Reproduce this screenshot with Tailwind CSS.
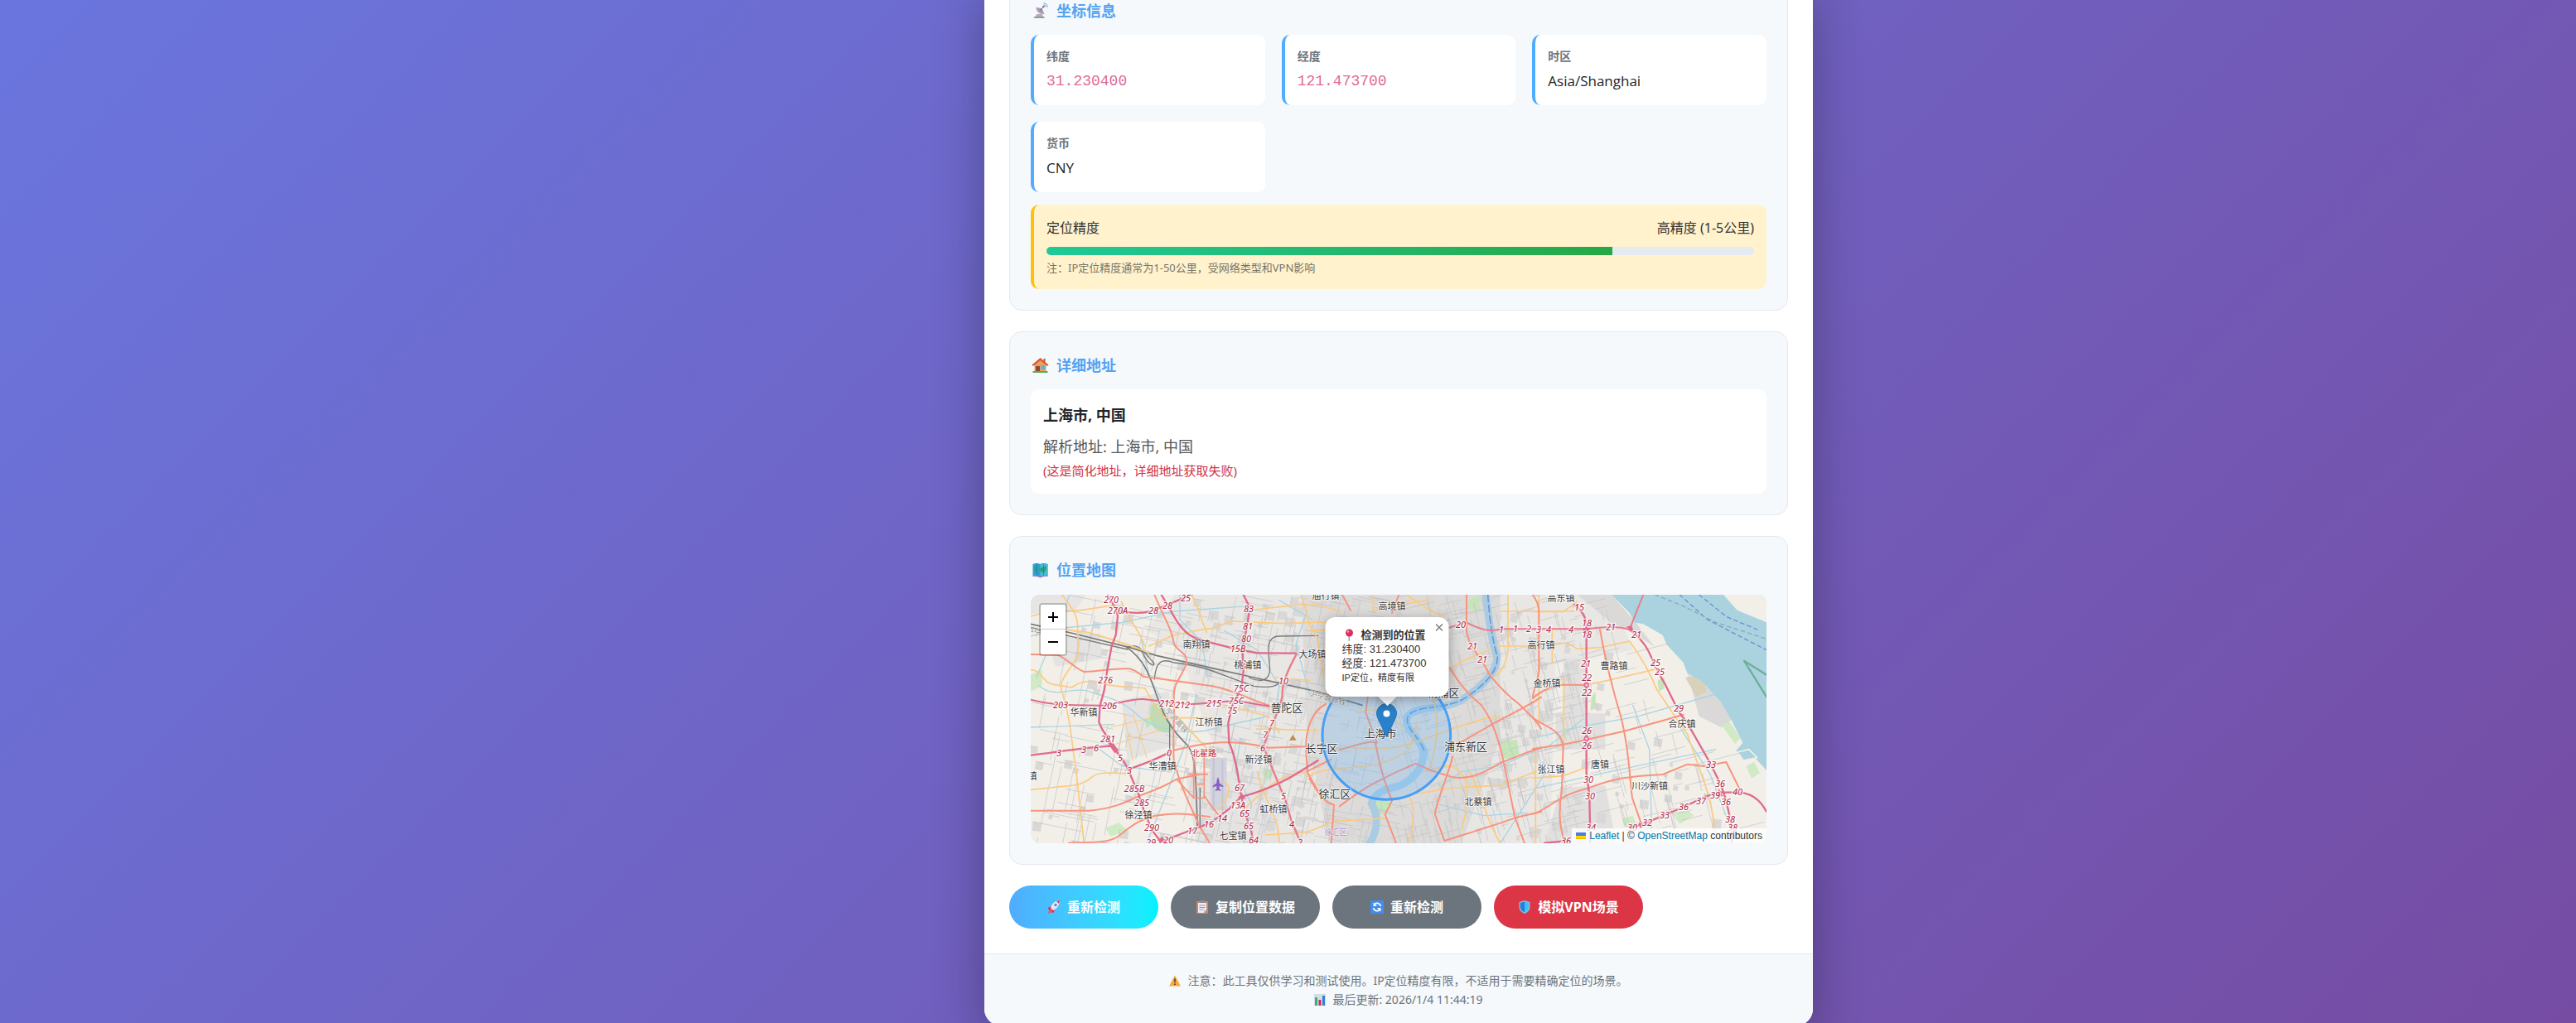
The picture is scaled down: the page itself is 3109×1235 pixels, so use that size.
<!DOCTYPE html>
<html lang="zh-CN">
<head>
    <meta charset="UTF-8">
    <meta name="viewport" content="width=device-width, initial-scale=1.0">
    <title>IP定位检测工具</title>
    <script src="https://cdn.jsdelivr.net/npm/@tailwindcss/browser@4"></script>
</head>
<body class="min-h-screen overflow-hidden bg-[linear-gradient(135deg,#6a76de_0%,#764ca3_100%)] pl-[267px] font-['Noto_Sans','Noto_Sans_CJK_SC',sans-serif] text-[#212529]">
    <div class="mx-auto -mt-7 max-w-[1000px] overflow-hidden rounded-[20px] bg-white shadow-[0_20px_60px_rgba(0,0,0,0.3)]">
        <main class="space-y-[25px] px-[30px] pb-[30px]">
            <!-- Coordinates -->
            <section class="rounded-[15px] border border-[#e2e8f0] bg-[#f6f9fc] p-[25px]">
                <h2 class="mb-[15px] flex h-[29px] items-center gap-2 text-lg font-bold text-[#54a3f2]">
                    <svg class="h-5 w-[23px]" viewBox="0 0 20 20" aria-hidden="true">
                        <path d="M3 18h11l-2-4H6z" fill="#b9aabf"/>
                        <path d="M3 17h12v2H2z" fill="#a293a9"/>
                        <path d="M5 6c0 6 4 9 10 8z" fill="#c9bcd0"/>
                        <path d="M5 6c1 4 5 8 10 8L12 7z" fill="#a99ab3"/>
                        <path d="M10 10l4-5" stroke="#7c6f86" stroke-width="1"/>
                        <circle cx="14" cy="5" r="1.2" fill="#6b5f78"/>
                        <path d="M14 2.5a4 4 0 0 1 3 3M14 .5a6 6 0 0 1 5 5" fill="none" stroke="#5aa7e6" stroke-width="1"/>
                    </svg>
                    坐标信息
                </h2>
                <dl class="grid grid-cols-3 gap-5">
                    <div class="rounded-[10px] border-l-4 border-[#4facfe] bg-white p-[15px]">
                        <dt class="mb-[5px] text-sm leading-[22px] font-semibold text-[#6c757d]">纬度</dt>
                        <dd class="font-['Liberation_Mono',monospace] text-lg leading-7 text-[#d63370]/75">31.230400</dd>
                    </div>
                    <div class="rounded-[10px] border-l-4 border-[#4facfe] bg-white p-[15px]">
                        <dt class="mb-[5px] text-sm leading-[22px] font-semibold text-[#6c757d]">经度</dt>
                        <dd class="font-['Liberation_Mono',monospace] text-lg leading-7 text-[#d63370]/75">121.473700</dd>
                    </div>
                    <div class="rounded-[10px] border-l-4 border-[#4facfe] bg-white p-[15px]">
                        <dt class="mb-[5px] text-sm leading-[22px] font-semibold text-[#6c757d]">时区</dt>
                        <dd class="font-['Open_Sans',sans-serif] text-[17px] leading-7 font-medium">Asia/Shanghai</dd>
                    </div>
                    <div class="rounded-[10px] border-l-4 border-[#4facfe] bg-white p-[15px]">
                        <dt class="mb-[5px] text-sm leading-[22px] font-semibold text-[#6c757d]">货币</dt>
                        <dd class="font-['Open_Sans',sans-serif] text-[17px] leading-7 font-medium">CNY</dd>
                    </div>
                </dl>
                <div class="mt-[15px] rounded-[10px] border-l-4 border-[#ffc107] bg-[#fff2cd] p-[15px]">
                    <div class="flex justify-between leading-[26px] text-[#333]">
                        <span>定位精度</span>
                        <span>高精度 (1-5公里)</span>
                    </div>
                    <div class="mt-[10px] mb-[5px] h-[10px] overflow-hidden rounded-[5px] bg-[#e6eaf3]">
                        <div class="h-full bg-linear-to-r from-[#20c997] to-[#28a745]" style="width: 80%"></div>
                    </div>
                    <p class="text-[13px] leading-[21px] text-[#777568]">注：IP定位精度通常为1-50公里，受网络类型和VPN影响</p>
                </div>
            </section>

            <!-- Address -->
            <section class="rounded-[15px] border border-[#e2e8f0] bg-[#f6f9fc] p-[25px]">
                <h2 class="mb-[15px] flex h-[29px] items-center gap-2 text-lg font-bold text-[#54a3f2]">
                    <svg class="h-5 w-[23px]" viewBox="0 0 20 20" aria-hidden="true">
                        <path d="M1 17h18v2H1z" fill="#5fa85a"/>
                        <path d="M3 9l7-6 7 6v8H3z" fill="#e9a15a"/>
                        <path d="M14 2h2v5l-2-2z" fill="#a35a3a"/>
                        <path d="M10 1L0 9.500l1.500 1.500L10 4l8.500 7 1.500-1.500z" fill="#df5433"/>
                        <path d="M4.500 11h5v6h-5z" fill="#8a4a32"/>
                        <path d="M11 10h5v5h-5z" fill="#5bb4dd"/>
                    </svg>
                    详细地址
                </h2>
                <div class="rounded-[10px] bg-white p-[15px]">
                    <p class="mb-[6px] text-lg leading-8 font-bold text-[#212529]">上海市, 中国</p>
                    <p class="text-lg leading-8 text-[#555]">解析地址: 上海市, 中国</p>
                    <p class="text-[15px] leading-[26px] text-[#cf3345]">(这是简化地址，详细地址获取失败)</p>
                </div>
            </section>

            <!-- Map -->
            <section class="rounded-[15px] border border-[#e2e8f0] bg-[#f6f9fc] p-[25px]">
                <h2 class="mb-4 flex h-[29px] items-center gap-2 text-lg font-bold text-[#54a3f2]">
                    <svg class="h-5 w-[23px]" viewBox="0 0 20 20" aria-hidden="true">
                        <path d="M1 3q5-2 9 0 4-2 9 0v14q-5-1-9 1-4-2-9-1z" fill="#2f9fd0"/>
                        <path d="M10 3q4-2 9 0v14q-5-1-9 1z" fill="#45bcd8"/>
                        <path d="M3 5l4 1v4l-3 3-1-3zM8 10l4-3 5-2v5l-3 4-3-2z" fill="#2c9f7c"/>
                        <path d="M6 2v15M14 2v14" stroke="#1f7fb4" stroke-width=".8"/>
                        <path d="M1 17q5-1 9 1 4-2 9-1v1q-5-1-9 1.500-4-2.500-9-1.500z" fill="#8d6fc0"/>
                    </svg>
                    位置地图
                </h2>
                <div class="relative isolate h-[300px] overflow-hidden rounded-[10px] bg-[#f2efe9]">
                    <svg class="absolute inset-0 size-full" viewBox="0 0 2664 900" preserveAspectRatio="xMidYMid slice" fill="none" stroke-linejoin="round" stroke-linecap="round" aria-hidden="true">
                        <!-- built-up land -->
                        <path d="M0 0H200L160 60 0 70z" fill="#e6e5e3"/>
                        <path d="M420 130L520 0H2100L2180 200 1900 250 1880 900H900L640 500 540 200z" fill="#e9e7e4"/>
                        <path d="M980 0H1700V520L1560 900H1080L1000 500z" fill="#dcdbda"/>
                        <path d="M330 380L500 350 530 540 350 600zM60 160L250 140 260 230 90 260zM560 640L900 640V900H600z" fill="#e4e3e2"/>
                        <path d="M1900 430H2080V560H1900zM1920 700L2080 690 2120 900H1860zM1928 230H2010V440H1928z" fill="#e1e0df"/>
                        <path d="M1980 0H2103L2190 100 2260 190 2170 130 2100 100zM2380 290L2470 330 2540 450 2500 480 2420 440z" fill="#dad9d8"/>
                        <g id="blocks" fill="#d9d8d7"></g>
                        <!-- parks -->
                        <path d="M435 400c30-20 60 10 55 50 20 10 30 30 10 50-30 0-60-10-70-50z" fill="#bfdcb6"/>
                        <path d="M410 450l20-5 10 20-20 20zM835 640l30-10 10 20-20 25zM1585 20l40-20v60l-40-10zM1700 530l60-5 10 55-55 15zM2270 310l24-10v40l-20 10zM1240 750l50-10 20 30-50 30zM2030 370l15-20v60l-18 10z" fill="#c5e5b8"/>
                        <path d="M2320 790l60-10 20 20-50 30zM2140 810l40-10 20 50-50-10zM2590 620l30-15 20 40-30 20zM2500 470l30-10 40 60-20 20zM270 845l50-20 30 30-60 20zM0 290l40-20v60l-40 20z" fill="#cfeac4"/>
                        <path d="M2370 300l60-10 20 60-40 20z" fill="#d9d2bb"/>
                        <!-- estuary -->
                        <path d="M2103 0L2168 66 2188 101 2218 106 2288 146 2303 181 2363 246 2378 286 2428 311 2498 386 2538 456 2578 536 2553 566 2618 586 2664 636V0z" fill="#aad3df"/>
                        <path d="M2508 0L2558 56 2664 100V0z" fill="#f2efe9"/>
                        <path d="M2560 570l40-10 30 30-50 10z" fill="#aad3df" stroke="#f2efe9" stroke-width="5"/>
                        <g stroke="#6d8fd0" stroke-width="4" stroke-dasharray="14 12">
                            <path d="M2350 0L2450 90 2664 200"/>
                            <path d="M2420 0L2520 80 2640 130"/>
                            <path d="M2260 0L2360 40 2480 100 2664 160" stroke="#8fa7bd"/>
                        </g>
                        <path d="M2664 290L2583 239 2664 370" stroke="#6fb09c" stroke-width="7"/>
                        <g id="streets" stroke="#c3c2c5" stroke-width="2"></g>
                        <!-- creeks -->
                        <g stroke="#a9d4e2" stroke-width="4">
                            <path d="M0 150L120 120 330 100 520 60 800 40M140 0L110 90 20 300M540 0V90L620 170 640 300M0 480L300 470"/>
                            <path d="M30 330C90 380 150 330 210 350S330 380 380 430 560 520 680 480L860 440M400 160L430 300 480 390M600 360L560 540 500 700 420 900M250 560L330 620 480 640"/>
                            <path d="M760 520L740 640 800 760 770 900M700 130L820 200 900 330 880 520M1000 60L960 180 1010 360M900 20L1020 90"/>
                            <path d="M1820 520L1980 480 2200 440 2480 360M2180 400L2240 560 2250 900M1830 700L2100 640 2480 560M2350 480L2460 650 2540 860M1860 560L2000 450"/>
                            <path d="M1480 700L1560 640 1700 620 1840 560M1480 760L1640 800 1800 790M1700 900L1790 760 1860 650"/>
                        </g>
                        <!-- Huangpu river -->
                        <path d="M1648 0C1658 96 1668 166 1688 226 1688 286 1628 336 1568 376 1488 426 1408 396 1368 436 1338 476 1408 516 1423 566 1423 626 1388 666 1338 691 1278 706 1248 716 1233 756 1258 796 1258 846 1228 900" stroke="#a9cce3" stroke-width="27"/>
                        <path d="M1655 0C1662 96 1672 166 1690 226 1690 286 1630 336 1570 376 1488 420 1408 396 1368 436 1345 476 1410 516 1425 566" stroke="#6f96d6" stroke-width="5" stroke-dasharray="26 12"/>
                        <!-- railways -->
                        <g stroke="#77797c" stroke-width="5">
                            <path d="M0 106L158 141 358 191 458 221 658 266 858 311 1038 351 1200 400"/>
                            <path d="M0 118L150 152 350 198" stroke-width="4"/>
                            <path d="M348 191C428 246 438 326 468 396 488 456 518 496 558 536 598 566 598 646 603 836"/>
                            <path d="M613 700V840M503 466V600M350 190C390 170 410 210 440 240 460 260 430 270 400 200" stroke-width="4"/>
                            <path d="M448 306C453 236 478 231 518 246 638 256 698 296 808 331 878 341 898 326 898 316" stroke-width="4"/>
                            <path d="M1040 148L900 150C850 150 860 200 866 270 864 316 828 316 790 300" stroke-width="4"/>
                        </g>
                        <!-- airport -->
                        <path d="M650 590h60v190h-60z" fill="#d3d3de"/>
                        <path d="M662 590v190M694 600v180" stroke="#c3c3d3" stroke-width="6"/>
                        <path d="M678 660l5 14v8l14 10v5l-14-4v10l5 5v3l-10-3-10 3v-3l5-5v-10l-14 4v-5l14-10v-8z" fill="#8461c4"/>
                        <path d="M936 527l13-20 13 20z" fill="#c08a52"/>
                        <!-- secondary roads -->
                        <g stroke="#fbca80" stroke-width="5">
                            <path d="M0 78L48 66M113 0C148 46 173 76 170 126L171 216C148 276 88 306 118 366 148 466 148 546 163 626L193 900"/>
                            <path d="M328 26C358 96 398 136 413 186M123 61C218 56 258 41 308 38M128 126L208 136C308 166 378 186 428 211"/>
                            <path d="M428 186L518 146C578 136 608 126 658 121L728 96 918 104 1180 95M583 0C608 46 618 96 638 136"/>
                            <path d="M978 0C998 46 1003 116 1038 156L1060 300M793 56L958 38 1038 36 1120 60"/>
                            <path d="M0 271C48 276 38 321 88 326L148 336C188 306 238 311 278 326 338 336 388 336 413 338L458 416 488 446 648 446M818 486L1038 491"/>
                            <path d="M0 706L98 696C158 691 188 691 228 656 258 636 328 651 358 646M530 440L640 560M770 780C850 700 900 650 1000 640"/>
                            <path d="M338 430L370 600M290 480L460 440M310 540L470 490M370 430L420 590" stroke-width="3"/>
                            <path d="M700 680C740 690 700 760 680 780M820 640C840 740 900 800 900 900M850 870L1000 860 1100 820 1280 810"/>
                            <path d="M880 300L1010 310M700 400L860 440 900 500M1240 0V60L1300 40 1440 20M1360 0C1420 40 1460 70 1500 75"/>
                            <path d="M1008 130L1070 128M1512 270C1560 240 1600 220 1660 200M1728 0V200C1720 260 1700 290 1670 300"/>
                            <path d="M1700 60H1990M1690 186H1850M1840 0V470M1560 850C1600 700 1580 640 1520 620L1420 640M1000 660C1100 600 1240 660 1370 560L1400 460"/>
                            <path d="M1400 720L1520 700 1700 690 1830 640M1370 730C1400 780 1380 840 1370 900M1180 430C1240 400 1290 430 1350 480"/>
                            <path d="M1080 560C1180 540 1280 580 1400 530 1500 500 1600 450 1700 440M1460 380C1480 470 1470 560 1440 640M1590 640C1640 740 1650 820 1700 900"/>
                            <path d="M1818 61H1928L1978 26M1818 176H1948L1978 196 2063 191 2168 168C2218 236 2248 296 2268 346L2378 506 2458 736 2478 846"/>
                            <path d="M1888 126V246M2028 324L2258 271M1818 664L1928 656 2008 626M1828 560V900M1930 300V560"/>
                        </g>
                        <!-- primary roads -->
                        <g stroke="#f8937d" stroke-width="6">
                            <path d="M0 216L98 218C138 236 158 266 193 279 258 276 308 264 358 268 388 276 398 291 408 296 478 306 558 316 658 331 738 346 808 386 863 401"/>
                            <path d="M448 0C478 76 513 126 518 176 528 206 568 206 565 246 548 296 518 316 518 366 523 446 513 506 518 596 538 686 578 766 613 841L648 900"/>
                            <path d="M518 563C578 551 618 536 718 534 758 536 808 541 858 554L1000 550"/>
                            <path d="M0 782H208C288 776 338 756 398 726 458 706 498 686 528 668L608 651"/>
                            <path d="M138 899C258 896 298 896 328 866 378 826 398 816 448 801 518 786 578 796 648 804"/>
                            <path d="M590 580V736H628V580M590 686H628M528 668L590 736M570 650H640M628 726C658 776 678 796 698 816" stroke-width="5"/>
                            <path d="M1068 396C1028 416 988 476 998 586L1003 646 1040 710M1000 640L1088 596"/>
                            <path d="M1578 0V136C1588 196 1648 246 1658 286 1698 336 1728 366 1768 396 1808 436 1833 456 1848 486"/>
                            <path d="M1518 266C1548 316 1588 366 1628 396 1668 446 1688 506 1708 586L1753 806 1788 900"/>
                            <path d="M1848 371C1798 406 1728 436 1668 471L1563 531 1508 546M1448 636L1528 661C1608 671 1648 636 1708 606 1768 586 1798 566 1848 556"/>
                            <path d="M1528 586C1508 666 1468 746 1464 796L1498 891C1608 856 1708 826 1753 808L1848 786"/>
                            <path d="M1008 666C1038 706 1048 746 1098 761L1088 900M1118 766C1158 736 1228 686 1278 666 1328 636 1368 626 1393 611L1448 636"/>
                            <path d="M1118 561C1178 546 1228 526 1248 536 1258 586 1268 646 1308 746L1283 796 1323 900M1223 346L1213 426 1253 536M1128 0L1158 56M1333 0L1308 66"/>
                            <path d="M1818 0C1833 26 1840 36 1840 66V276C1833 326 1818 346 1818 376 1848 346 1898 326 1928 326L2012 327"/>
                            <path d="M1818 446C1858 476 1918 486 1928 546L1923 706C1908 796 1918 846 1933 900"/>
                            <path d="M1818 558L1928 542 2008 526 2148 494 2288 456 2363 434M1818 794C1878 776 1908 726 2018 701 2108 666 2158 658 2288 651L2378 614 2438 621 2518 606 2568 706"/>
                            <path d="M2061 126C2078 226 2108 346 2138 446 2168 566 2168 666 2178 736L2213 836"/>
                        </g>
                        <!-- expressways -->
                        <g stroke="#e06a8c" stroke-width="7">
                            <path d="M278 0L308 51 315 76 308 146 293 186 278 266 266 346 251 401 247 461 258 486 293 541"/>
                            <path d="M308 51C358 71 418 71 463 49L583 0M473 0L503 51C533 106 558 146 608 161 678 181 738 196 778 203L818 211 958 212"/>
                            <path d="M770 0L793 46 783 116 766 196 770 276 763 336 728 406 715 466 718 536C748 596 753 686 763 731L778 796 798 856 808 900"/>
                            <path d="M0 380C58 396 108 399 158 400L253 401C298 401 358 376 408 378L478 386 578 396C658 394 718 381 758 386L863 404" stroke-width="6"/>
                            <path d="M0 581C108 568 208 551 293 548 328 586 348 616 358 646L388 716 408 776 438 851 468 891M358 631L438 601 503 571"/>
                            <path d="M763 731L718 776 658 821 613 841 558 861 468 896M763 731C828 716 908 681 958 651L1040 600"/>
                            <path d="M963 214C928 276 908 326 911 366 903 416 878 456 858 506L843 551 873 626 898 686 923 746 943 816 978 900" stroke="#e97c8a"/>
                            <path d="M1508 121L1578 101C1628 126 1658 136 1708 124H2010C2078 118 2118 111 2168 126L2218 0" stroke="#e97c8a" stroke-width="6"/>
                            <path d="M2168 126C2218 166 2238 196 2258 256L2298 326 2348 426 2378 466 2458 606 2498 686 2518 746 2538 836V900"/>
                            <path d="M1968 36C2008 66 2013 96 2012 126V646L2023 726 2026 900"/>
                            <path d="M2664 786C2638 736 2598 716 2558 716H2498C2438 726 2398 756 2358 771L2228 826 2168 846M1860 899L1948 891"/>
                        </g>
                        <path d="M278 535l20 0 20 30-15 8zM458 890l20-15 10 20zM750 735l15-15 15 20zM2000 120h24v12h-24zM2156 116l20-4 8 24zM2490 700l16 30-18 0zM2200 824l20 10-12 12z" fill="#e06a8c"/>
                        <g fill="#f2d3dd" stroke="#e06a8c" stroke-width="5">
                            <circle cx="2012" cy="327" r="7"/>
                            <circle cx="2012" cy="521" r="7"/>
                        </g>
                        <!-- accuracy radius -->
                        <circle cx="1288" cy="510" r="232" fill="#5fb4ff" fill-opacity="0.25" stroke="#469ef5" stroke-width="9"/>
                    </svg>

                    <svg class="absolute inset-0 size-full" viewBox="0 0 888 300" preserveAspectRatio="xMidYMid slice" text-anchor="middle" paint-order="stroke" stroke="#ffffff" stroke-opacity="0.7" stroke-linejoin="round">
                        <g id="refs" class="text-[11px] italic" fill="#b02a4a" stroke-width="3"></g>
                        <g id="towns" class="text-[11px]" fill="#3c3c3c" stroke-width="2"></g>
                        <g id="districts" class="text-[13px]" fill="#333333" stroke-width="2"></g>
                        <text x="209" y="195" class="text-[10px]" fill="#c02b3c" stroke-width="2">北翟路</text>
                        <text x="368" y="290" class="text-[9px]" fill="#a58ac0" stroke-width="1">徐汇区</text>
                        <text x="176" y="155" class="text-[9px]" fill="#8a8a8a" stroke-width="1" transform="rotate(48 176 152)">宁沪高铁</text>
                        <text x="358" y="128" class="text-[9px]" fill="#8a8a8a" stroke-width="1" transform="rotate(14 358 128)">沪宁城际线</text>
                        <text x="3" y="48" class="text-[9px]" fill="#8a8a8a" stroke-width="1" transform="rotate(12 3 48)">沪宁</text>
                    </svg>

                    <!-- Marker -->
                    <svg class="absolute top-[131px] left-[calc(50%-27px)] h-[41px] w-[25px]" viewBox="0 0 25 41" aria-hidden="true">
                        <path d="M12.500.5C5.900.5.5 5.800.500 12.300c0 2.800 1.500 6.200 2.700 8.700L12.500 40.500l9.300-19.500c1.200-2.500 2.700-5.900 2.700-8.700C24.500 5.800 19.100.5 12.500.5z" fill="#2a81cb" stroke="#2471b0"/>
                        <circle cx="12.500" cy="12.500" r="4" fill="#fff"/>
                    </svg>

                    <!-- Popup -->
                    <div class="absolute top-[27px] left-[calc(50%-14px)] -translate-x-1/2 font-['Liberation_Sans','Noto_Sans_CJK_SC',sans-serif] text-[13px] text-[#333]">
                        <div class="absolute -bottom-2 left-1/2 size-4 -translate-x-1/2 rotate-45 bg-white shadow-[0_3px_14px_rgba(0,0,0,0.3)]"></div>
                        <div class="relative w-[149px] rounded-xl bg-white px-5 pt-[13px] pb-[14px] whitespace-nowrap shadow-[0_3px_14px_rgba(0,0,0,0.3)]">
                            <p class="flex items-center gap-[6px] leading-[17px] font-bold">
                                <svg class="h-[15px] w-[17px]" viewBox="0 0 17 15" aria-hidden="true">
                                    <path d="M8 8h1.500v7H8z" fill="#9aa3ad"/>
                                    <circle cx="9" cy="5" r="4.500" fill="#dd2e5f"/>
                                    <circle cx="7.500" cy="3.500" r="1.300" fill="#f7a3bb"/>
                                </svg>
                                检测到的位置
                            </p>
                            <p class="leading-[17px]">纬度: 31.230400</p>
                            <p class="leading-[17px]">经度: 121.473700</p>
                            <p class="text-[11px] leading-[18px]">IP定位，精度有限</p>
                            <button class="absolute top-0 right-0 flex size-6 items-center justify-center text-[#757575]" aria-label="关闭">
                                <svg class="size-[9px]" viewBox="0 0 9 9"><path d="M.5.5l8 8M8.500.5l-8 8" stroke="currentColor" stroke-width="1.300"/></svg>
                            </button>
                        </div>
                    </div>

                    <!-- Zoom control -->
                    <div class="absolute top-[10px] left-[10px] flex flex-col overflow-hidden rounded border-2 border-black/20 bg-clip-padding">
                        <button class="flex size-[30px] items-center justify-center border-b border-[#ccc] bg-white text-black" aria-label="放大">
                            <svg class="size-3" viewBox="0 0 12 12"><path d="M6 0v12M0 6h12" stroke="currentColor" stroke-width="2"/></svg>
                        </button>
                        <button class="flex size-[30px] items-center justify-center bg-white text-black" aria-label="缩小">
                            <svg class="size-3" viewBox="0 0 12 12"><path d="M0 6h12" stroke="currentColor" stroke-width="2"/></svg>
                        </button>
                    </div>

                    <!-- Attribution -->
                    <div class="absolute right-0 bottom-0 flex items-center gap-1 bg-white/80 px-[5px] font-['Liberation_Sans',sans-serif] text-xs leading-[18px] text-[#333]">
                        <svg class="h-2 w-3" viewBox="0 0 12 8" aria-hidden="true"><path fill="#4c7be1" d="M0 0h12v4H0z"/><path fill="#ffd500" d="M0 4h12v3H0z"/><path fill="#e0bc00" d="M0 7h12v1H0z"/></svg>
                        <span><a href="#" class="text-[#0078a8]">Leaflet</a> | © <a href="#" class="text-[#0078a8]">OpenStreetMap</a> contributors</span>
                    </div>
                </div>
            </section>

            <!-- Actions -->
            <div class="flex flex-wrap gap-[15px] font-bold text-white">
                <button class="flex h-[52px] w-[180px] items-center justify-center gap-2 rounded-full bg-linear-to-r from-[#4facfe] to-[#00f2fe]">
                    <svg class="size-4" viewBox="0 0 16 16" aria-hidden="true">
                        <path d="M4 7L1 9l1 3 3-2zM9 12l-2 3-3-1 2-3z" fill="#d8304f"/>
                        <path d="M4 9c1-5 6-9 11-9 0 5-3 10-8 12z" fill="#e9e3ee"/>
                        <path d="M11 1l4-1-1 4z" fill="#e0395a"/>
                        <circle cx="10" cy="5.500" r="1.700" fill="#5b8fd0"/>
                        <path d="M4 9l3 3-2 2-4 2 1-4z" fill="#f0506a"/>
                    </svg>
                    重新检测
                </button>
                <button class="flex h-[52px] w-[180px] items-center justify-center gap-2 rounded-full bg-[#6c757d]">
                    <svg class="size-4" viewBox="0 0 16 16" aria-hidden="true">
                        <rect x="1" y="1" width="14" height="15" rx="1" fill="#c98a63"/>
                        <path d="M3 3h10v9l-3 3H3z" fill="#efe9f3"/>
                        <path d="M10 15v-3h3z" fill="#b9b2c4"/>
                        <path d="M5 0h6v3H5z" fill="#8f8a99"/>
                        <path d="M4.500 6h7M4.500 8.500h7M4.500 11h5" stroke="#9a93a8"/>
                    </svg>
                    复制位置数据
                </button>
                <button class="flex h-[52px] w-[180px] items-center justify-center gap-2 rounded-full bg-[#6c757d]">
                    <svg class="size-4" viewBox="0 0 16 16" aria-hidden="true">
                        <rect width="16" height="16" rx="1.500" fill="#3f8df0"/>
                        <path d="M12.500 7A4.600 4.600 0 0 0 5 4.500M3.500 9A4.600 4.600 0 0 0 11 11.500" fill="none" stroke="#fff" stroke-width="1.700"/>
                        <path d="M3.500 2.500v4.500H8zM12.500 13.500V9H8z" fill="#fff"/>
                    </svg>
                    重新检测
                </button>
                <button class="flex h-[52px] w-[180px] items-center justify-center gap-2 rounded-full bg-[#dc3545]">
                    <svg class="size-4" viewBox="0 0 16 16" aria-hidden="true">
                        <path d="M8 0l6.500 2v6c0 4-3 6.500-6.500 8C4.500 14.500 1.500 12 1.500 8V2z" fill="#8fb8d8"/>
                        <path d="M8 1.500v13C5 13 3 11 3 8V3z" fill="#1f7fe0"/>
                        <path d="M8 1.500v13c3-1.500 5-3.500 5-6.500V3z" fill="#3fc0f5"/>
                    </svg>
                    模拟VPN场景
                </button>
            </div>
        </main>

        <footer class="border-t border-[#e2e6ea] bg-[#f6f9fc] p-5 text-center text-sm leading-[23px] text-[#6c757d]">
            <p class="flex items-center justify-center gap-2">
                <svg class="size-[14px]" viewBox="0 0 14 14" aria-hidden="true">
                    <path d="M7 .5L14 13.500H0z" fill="#f8a93c"/>
                    <path d="M6.200 4.500h1.600L7.500 9.500h-1zM6.200 10.500h1.600v1.500H6.200z" fill="#3d3226"/>
                </svg>
                注意：此工具仅供学习和测试使用。IP定位精度有限，不适用于需要精确定位的场景。
            </p>
            <p class="flex items-center justify-center gap-2">
                <svg class="size-[14px]" viewBox="0 0 14 14" aria-hidden="true">
                    <path d="M0 0h14v14H0z" fill="#d5dde6"/>
                    <path d="M1 4h3v10H1z" fill="#2fb573"/>
                    <path d="M5.500 7h3v7h-3z" fill="#d8265c"/>
                    <path d="M10 2h3v12h-3z" fill="#2f80d8"/>
                </svg>
                最后更新: 2026/1/4 11:44:19
            </p>
        </footer>
    </div>

    <script>
        const refs = [
            [97, 6, '270'], [105, 19, '270A'], [148, 19, '28'], [165, 13, '28'], [187, 4, '25'], [263, 17, '83'],
            [262, 38, '81'], [260, 53, '80'], [250, 65, '15B'], [305, 104, '10'], [254, 113, '75C'], [248, 128, '75C'],
            [243, 140, '75'], [90, 103, '276'], [36, 133, '203'], [95, 134, '206'], [164, 131, '212'], [183, 133, '212'],
            [221, 131, '215'], [291, 155, '7'], [283, 169, '7'], [280, 185, '6'], [93, 174, '281'], [34, 191, '3'],
            [64, 187, '3'], [79, 185, '6'], [108, 197, '5'], [119, 212, '3'], [167, 191, '0'], [125, 234, '285B'],
            [134, 251, '285'], [146, 281, '290'], [145, 299, '29'], [166, 296, '20'], [195, 285, '17'], [215, 277, '16'],
            [231, 270, '14'], [250, 254, '13A'], [252, 233, '67'], [258, 264, '65'], [263, 279, '65'], [269, 296, '64'],
            [305, 243, '5'], [315, 277, '4'], [325, 299, '2'], [519, 36, '20'], [533, 62, '21'], [545, 78, '21'],
            [568, 42, '1'], [585, 41, '1'], [601, 41, '2'], [613, 42, '3'], [625, 42, '4'], [652, 42, '4'],
            [662, 15, '15'], [671, 34, '18'], [671, 48, '18'], [700, 39, '21'], [731, 48, '21'], [670, 83, '21'],
            [671, 100, '22'], [671, 118, '22'], [754, 82, '25'], [759, 93, '25'], [782, 137, '29'], [671, 164, '26'],
            [671, 182, '26'], [673, 223, '30'], [675, 243, '30'], [676, 281, '34'], [646, 297, '36'], [821, 205, '33'],
            [832, 228, '36'], [826, 242, '39'], [853, 238, '40'], [839, 250, '36'], [809, 249, '37'], [788, 256, '36'],
            [765, 266, '33'], [744, 275, '32'], [726, 281, '30'], [844, 271, '38'], [847, 281, '38']
        ];
        const towns = [
            [200, 60, '南翔镇'], [262, 85, '桃浦镇'], [340, 72, '大场镇'], [64, 142, '华新镇'], [215, 154, '江桥镇'],
            [159, 207, '华漕镇'], [275, 199, '新泾镇'], [130, 266, '徐泾镇'], [293, 259, '虹桥镇'], [244, 291, '七宝镇'],
            [2, 219, '镇'], [356, 1, '庙行镇'], [436, 14, '高境镇'], [540, 250, '北蔡镇'], [616, 61, '高行镇'],
            [623, 107, '金桥镇'], [628, 211, '张江镇'], [687, 205, '唐镇'], [747, 231, '川沙新镇'], [786, 156, '合庆镇'],
            [704, 86, '曹路镇'], [640, 4, '高东镇']
        ];
        const districts = [
            [309, 137, '普陀区'], [351, 186, '长宁区'], [498, 119, '杨浦区'], [422, 168, '上海市'],
            [525, 184, '浦东新区'], [367, 241, '徐汇区']
        ];
        const svgNode = (name, attrs) => {
            const node = document.createElementNS('http://www.w3.org/2000/svg', name);
            Object.entries(attrs).forEach(([key, value]) => node.setAttribute(key, value));
            return node;
        };
        const addLabels = (id, labels) => {
            labels.forEach(([x, y, label]) => {
                const node = svgNode('text', { x, y: y + 4 });
                node.textContent = label;
                document.getElementById(id).appendChild(node);
            });
        };
        addLabels('refs', refs);
        addLabels('towns', towns);
        addLabels('districts', districts);

        // Minor streets and building blocks, from a fixed seed
        let seed = 7;
        const random = () => (seed = (seed * 16807) % 2147483647) / 2147483647;
        const onLand = (x, y) => x < 2060 + y * 0.6;
        let streets = '';
        let blocks = '';
        for (let i = 0; i < 1500; i++) {
            const x = random() * 2664;
            const y = random() * 900;
            const dense = x > 560 && x < 1950;
            if (!onLand(x, y) || (!dense && random() < 0.6)) continue;
            const tilt = x < 1300 ? 0.2 : -0.25;
            const length = 30 + random() * (dense ? 90 : 160);
            const angle = tilt + (random() < 0.5 ? 0 : Math.PI / 2);
            streets += `M${Math.round(x)} ${Math.round(y)}l${Math.round(Math.cos(angle) * length)} ${Math.round(Math.sin(angle) * length)}`;
            if (i % 3 === 0) {
                const size = 10 + Math.round(random() * 24);
                blocks += `M${Math.round(x)} ${Math.round(y)}l${size} 4l-4 ${size}l-${size}-4z`;
            }
        }
        document.getElementById('streets').appendChild(svgNode('path', { d: streets }));
        document.getElementById('blocks').appendChild(svgNode('path', { d: blocks }));
    </script>
</body>
</html>
